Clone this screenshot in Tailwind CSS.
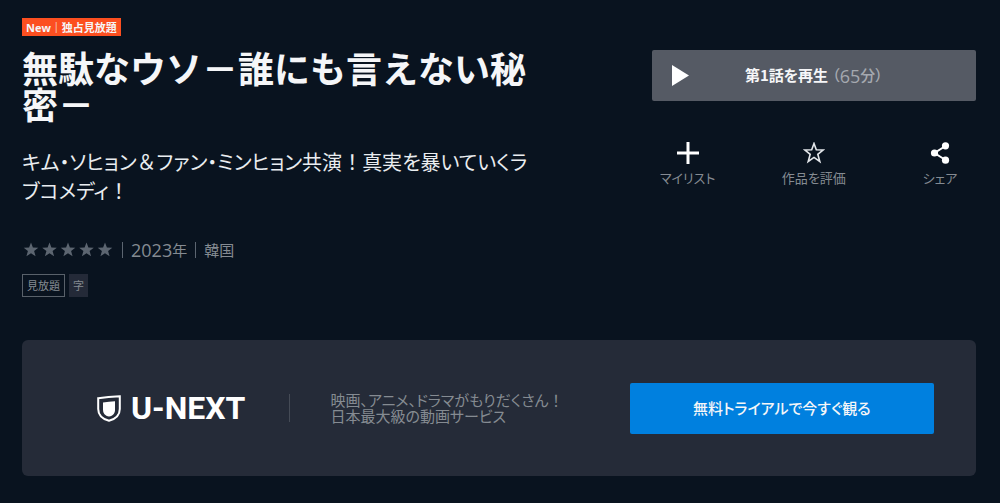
<!DOCTYPE html>
<html lang="ja">
<head>
<meta charset="utf-8">
<meta name="viewport" content="width=device-width, initial-scale=1">
<title>無駄なウソ－誰にも言えない秘密－ | U-NEXT</title>
<script src="https://cdn.jsdelivr.net/npm/@tailwindcss/browser@4"></script>
</head>
<body class="min-h-screen bg-[#09131f] pt-[18px] pr-6 pb-6 pl-[22px] font-['Noto_Sans_CJK_JP',sans-serif] text-[#f5f6f8]">
<main>
  <div class="flex items-start justify-between gap-10">
    <section class="max-w-[514px] min-w-0 flex-1">
      <p class="flex h-[18px] w-fit items-center bg-[#fc4f20] px-1 font-['Open_Sans','Noto_Sans_CJK_JP',sans-serif] text-[11px] leading-none font-bold">New｜独占見放題</p>
      <h1 class="mt-[13px] text-[36px] leading-9 font-bold">無駄なウソ－誰にも言えない秘密－</h1>
      <p class="mt-[26px] text-[20px] leading-[29px] text-[#eaedf0] [font-feature-settings:'palt']">キム・ソヒョン<span class="[font-feature-settings:normal]">＆</span>ファン・ミンヒョン共演<span class="[font-feature-settings:normal]">！</span>真実を暴いていくラブコメディ<span class="[font-feature-settings:normal]">！</span></p>
      <div class="mt-[33px] flex h-6 items-center text-[15px] text-[#858b92]">
        <svg class="h-4 w-[96px]" viewBox="0 0 96 16" fill="#5c6570" role="img" aria-label="評価なし">
          <defs><path id="star" d="M9 0.500l1.900 5 5.400.2-4.200 3.400 1.500 5.200L9 11.300l-4.600 3 1.500-5.200L1.700 5.700l5.400-.2z"/></defs>
          <use href="#star"/><use href="#star" x="18.500"/><use href="#star" x="37"/><use href="#star" x="55.500"/><use href="#star" x="74"/>
        </svg>
        <span class="ml-1 h-4 w-px bg-[#5c6570]"></span>
        <span class="ml-2 flex items-center"><span class="font-['Open_Sans',sans-serif] text-[18px] leading-6">2023</span>年</span>
        <span class="ml-2 h-4 w-px bg-[#5c6570]"></span>
        <span class="ml-2">韓国</span>
      </div>
      <div class="mt-3 flex gap-1 text-[11px] leading-none text-[#858b92]">
        <span class="flex h-[23px] items-center border border-[#59616a] px-1">見放題</span>
        <span class="flex h-[23px] items-center bg-[#242a38] px-1">字</span>
      </div>
    </section>
    <aside class="mt-8 w-[34%]">
      <button class="flex h-[51px] w-full items-center rounded-xs bg-[#555a64] pr-[37px] pl-5 text-[15px] font-bold">
        <svg class="h-[21px] w-[17px]" viewBox="0 0 17 22" preserveAspectRatio="none" fill="#fff" aria-hidden="true"><path d="M0 0l17 11L0 22z"/></svg>
        <span class="flex flex-1 items-center justify-center [font-feature-settings:'palt']">第1話を再生<span class="ml-1 flex items-center font-medium text-[#a5a9b0]">（<span class="font-['Open_Sans',sans-serif] text-[18px] leading-6">65</span>分）</span></span>
      </button>
      <div class="mt-[41px] flex justify-between text-[13px] leading-5 text-[#858b92] [font-feature-settings:'palt']">
        <button class="flex w-[72px] flex-col items-center gap-1">
          <svg class="size-[22px]" viewBox="0 0 22 22" stroke="#fff" stroke-width="3" aria-hidden="true"><path d="M0 11h22M11 0v22"/></svg>
          マイリスト
        </button>
        <button class="flex w-[72px] flex-col items-center gap-1">
          <svg class="size-[22px]" viewBox="0 0 22 22" fill="none" stroke="#e4e7eb" stroke-width="1.600" aria-hidden="true"><path d="M11 1.500l2.300 6.200 7 .2-5.500 4.400 2 7.200-5.800-4.100-5.800 4.100 2-7.200L1.700 7.900l7-.2z"/></svg>
          作品を評価
        </button>
        <button class="flex w-[72px] flex-col items-center gap-1">
          <svg class="size-[22px]" viewBox="0 0 22 22" fill="#fff" aria-hidden="true"><path d="M16.500 4L5.500 11l11 7" fill="none" stroke="#fff" stroke-width="2"/><circle cx="16.500" cy="3.800" r="3.600"/><circle cx="5.500" cy="11" r="3.600"/><circle cx="16.500" cy="18.200" r="3.600"/></svg>
          シェア
        </button>
      </div>
    </aside>
  </div>
  <section class="mt-[43px] flex h-[136px] items-center rounded-md bg-[#252b38] pr-[42px] pl-[75px] [font-feature-settings:'palt']">
    <div class="flex items-center gap-[10px] border-r border-[#454b56] pr-11">
      <svg class="h-[27px] w-6" viewBox="0 0 24 27" aria-hidden="true">
        <path d="M1.200 3.200Q11 1.700 22.800 1.200V14C22.800 20.500 18.500 24 12 25.800 5.500 24 1.200 20.500 1.200 14z" fill="none" stroke="#fff" stroke-width="2"/>
        <path d="M6 7.500Q12 6.600 18 6.200V14.500C18 18.500 16 20.700 12 21.500 8 20.700 6 18.500 6 14.500z" fill="#fff"/>
      </svg>
      <span class="font-[Roboto,sans-serif] text-[32px] leading-7 font-bold text-white">U-NEXT</span>
    </div>
    <p class="ml-10 text-[15px] leading-4 whitespace-nowrap text-[#858b92]">映画、アニメ、ドラマがもりだくさん<span class="[font-feature-settings:normal]">！</span><br>日本最大級の動画サービス</p>
    <a href="#" class="ml-auto flex h-[51px] w-4/11 items-center justify-center rounded-xs bg-[#0080df] text-[15px] font-medium">無料トライアルで今すぐ観る</a>
  </section>
</main>
</body>
</html>
